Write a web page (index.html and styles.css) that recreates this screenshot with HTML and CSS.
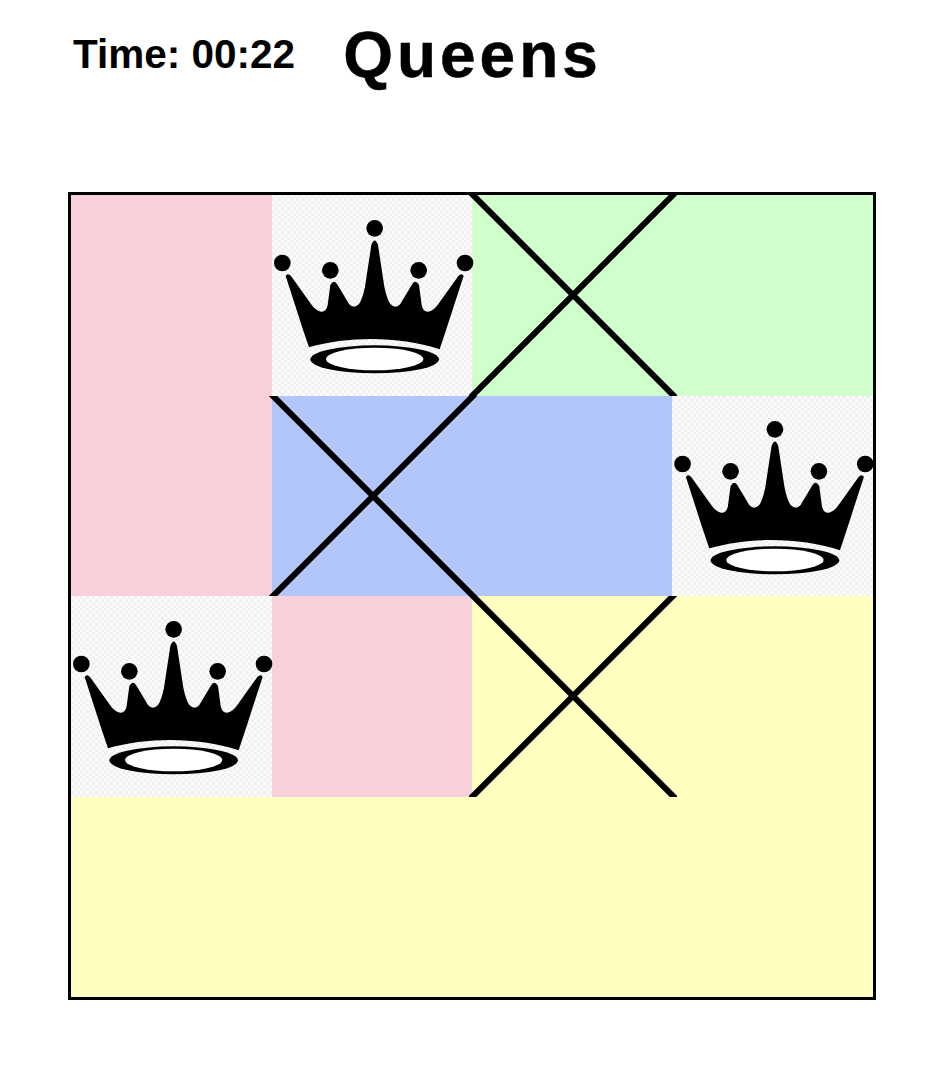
FILE: index.html
```html
<!DOCTYPE html>
<html lang="en">
<head>
<meta charset="utf-8">
<title>Queens</title>
<link rel="stylesheet" href="styles.css">
</head>
<body>
<svg class="defs" width="0" height="0" aria-hidden="true">
  <defs>
    <g id="crown">
      <circle cx="327" cy="115" r="25"/>
      <circle cx="50" cy="219" r="25"/>
      <circle cx="598" cy="219" r="25"/>
      <circle cx="194" cy="241" r="25"/>
      <circle cx="459" cy="241" r="25"/>
      <path d="M60 258 Q66 248 76 258 L136 342 Q150 363 167 365 Q182 366 186 345 L194 285 Q205 266 216 285 L250 342 Q264 358 280 342 Q290 328 298 290 L317 165 Q327 138 337 165 L356 290 Q364 328 374 342 Q390 358 404 342 L438 285 Q449 266 460 285 L468 345 Q472 366 487 365 Q504 363 518 342 L578 258 Q588 248 594 258 C570 330 545 410 522 478 C400 438 250 438 130 472 C105 400 82 325 60 258 Z"/>
      <ellipse cx="327" cy="508" rx="193" ry="42"/>
      <ellipse class="crown-hole" cx="327" cy="507" rx="146" ry="34"/>
    </g>
    <g id="cross">
      <path class="cross-line" d="M-6 -10 L214 210 M-6 210 L214 -10"/>
    </g>
  </defs>
</svg>
<header class="top">
  <div class="timer">Time: 00:22</div>
  <h1 class="title">Queens</h1>
</header>
<main class="board">
  <div class="cell pink"></div>
  <div class="cell queen"><svg class="crown" viewBox="19 15 601.5 601.5"><use href="#crown"/></svg></div>
  <div class="cell green"><svg class="cross" viewBox="0 0 208 200.5"><use href="#cross"/></svg></div>
  <div class="cell green"></div>

  <div class="cell pink"></div>
  <div class="cell blue"><svg class="cross" viewBox="0 0 208 200.5"><use href="#cross"/></svg></div>
  <div class="cell blue"></div>
  <div class="cell queen"><svg class="crown" viewBox="19 15 601.5 601.5"><use href="#crown"/></svg></div>

  <div class="cell queen"><svg class="crown" viewBox="19 15 601.5 601.5"><use href="#crown"/></svg></div>
  <div class="cell pink"></div>
  <div class="cell yellow"><svg class="cross" viewBox="0 0 208 200.5"><use href="#cross"/></svg></div>
  <div class="cell yellow"></div>

  <div class="cell yellow"></div>
  <div class="cell yellow"></div>
  <div class="cell yellow"></div>
  <div class="cell yellow"></div>
</main>
</body>
</html>
```
FILE: styles.css
```css
html, body {
  margin: 0;
  padding: 0;
  background: #fff;
}

body {
  font-family: "Liberation Sans", Arial, sans-serif;
  color: #000;
  width: 946px;
  height: 1066px;
  overflow: hidden;
}

.defs {
  display: block;
  height: 0;
}

.top {
  display: flex;
  align-items: flex-start;
  height: 192px;
  padding-left: 73px;
  box-sizing: border-box;
  padding-top: 19px;
}

.timer {
  font-size: 40.5px;
  font-weight: 700;
  line-height: 46px;
  margin-top: 12px;
  white-space: nowrap;
}

.title {
  margin: 0 0 0 48px;
  font-size: 64px;
  font-weight: 700;
  line-height: 72px;
  letter-spacing: 4px;
  -webkit-text-stroke: 0.5px #000;
}

.board {
  display: grid;
  grid-template-columns: 200.5px 200.5px 200px 201px;
  grid-template-rows: repeat(4, 200.5px);
  width: 802px;
  margin-left: 68px;
  border: 3px solid #000;
}

.cell {
  position: relative;
}

.pink { background: #f8d0da; }
.green { background: #d0ffcc; }
.blue { background: #b3c6fa; }
.yellow { background: #ffffc0; }

.queen {
  background-color: #fff;
  background-image: repeating-conic-gradient(#f1f1f1 0 25%, #fbfbfb 0 50%);
  background-size: 6px 6px;
}

.crown {
  display: block;
  position: relative;
  z-index: 1;
  width: 100%;
  height: 100%;
  overflow: visible;
}

.crown-hole {
  fill: #fff;
}

.cross {
  position: absolute;
  left: -3px;
  top: 0;
  width: 208px;
  height: 200.5px;
  z-index: 1;
}

.cross-line {
  fill: none;
  stroke: #000;
  stroke-width: 6;
}
```
